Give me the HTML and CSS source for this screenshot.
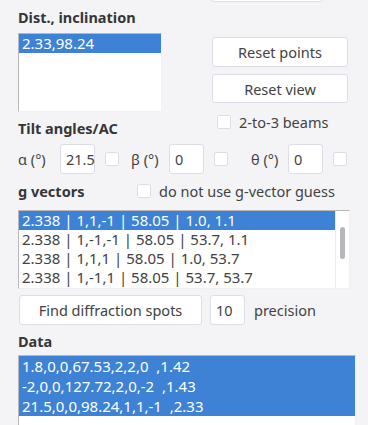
FILE: index.html
```html
<!DOCTYPE html>
<html lang="en">
<head>
    <meta charset="UTF-8">
    <title>Diffraction</title>
    <link rel="stylesheet" href="styles.css">
</head>
<body>
    <div class="panel">
        <!-- Top: distance list + buttons -->
        <div class="top-row">
            <div class="left-col">
                <h3 class="label">Dist., inclination</h3>
                <div class="listbox list-dist">
                    <div class="list-item selected">2.33,98.24</div>
                </div>
                <h3 class="label label-tilt">Tilt angles/AC</h3>
            </div>
            <div class="right-col">
                <button class="btn btn-top"></button>
                <button class="btn btn-wide btn-reset">Reset points</button>
                <button class="btn btn-wide btn-view">Reset view</button>
                <label class="check check-beams"><span class="box"></span>2-to-3 beams</label>
            </div>
        </div>

        <!-- Tilt angles -->
        <div class="angle-row">
            <span class="angle-label">α (°)</span>
            <div class="field">21.5</div>
            <span class="box box-angle"></span>
            <span class="angle-label lbl-beta">β (°)</span>
            <div class="field">0</div>
            <span class="box box-angle"></span>
            <span class="angle-label lbl-theta">θ (°)</span>
            <div class="field">0</div>
            <span class="box box-angle"></span>
        </div>

        <!-- g vectors -->
        <div class="gvec-row">
            <h3 class="label">g vectors</h3>
            <label class="check check-guess"><span class="box"></span>do not use g-vector guess</label>
        </div>
        <div class="listbox list-gvec">
            <div class="list-rows">
                <div class="list-item selected">2.338 | 1,1,-1 | 58.05 | 1.0, 1.1</div>
                <div class="list-item">2.338 | 1,-1,-1 | 58.05 | 53.7, 1.1</div>
                <div class="list-item">2.338 | 1,1,1 | 58.05 | 1.0, 53.7</div>
                <div class="list-item">2.338 | 1,-1,1 | 58.05 | 53.7, 53.7</div>
            </div>
            <div class="scroll-track"><div class="scroll-thumb"></div></div>
        </div>

        <div class="find-row">
            <button class="btn btn-find">Find diffraction spots</button>
            <div class="field field-prec">10</div>
            <span class="prec-label">precision</span>
        </div>

        <!-- Data -->
        <h3 class="label label-data">Data</h3>
        <div class="listbox list-data">
            <div class="list-item selected">1.8,0,0,67.53,2,2,0 &nbsp;,1.42</div>
            <div class="list-item selected">-2,0,0,127.72,2,0,-2 &nbsp;,1.43</div>
            <div class="list-item selected">21.5,0,0,98.24,1,1,-1 &nbsp;,2.33</div>
        </div>
    </div>
</body>
</html>
```

FILE: styles.css
```css
:root {
    --bg: #f4f4f7;
    --text: #424242;
    --border: #dcdde8;
    --select: #3d82d5;
}

* { margin: 0; padding: 0; box-sizing: border-box; }
body {
    font-family: 'Noto Sans', sans-serif; font-size: 14.5px;
    background: var(--bg); color: var(--text); overflow: hidden;
}

.panel { padding: 0 18px; }

/* Labels */
.label { font-size: 14.5px; font-weight: bold; line-height: 18px; color: #363636; }

/* Top area */
.top-row { display: flex; }
.left-col { width: 194px; padding-top: 8px; }
.right-col { display: flex; flex-direction: column; align-items: flex-start; }
.label-tilt { margin-top: 7px; }

/* Buttons */
.btn {
    background: white; border: 1px solid var(--border); border-radius: 3px;
    font-family: inherit; font-size: 14.5px; color: var(--text); height: 30px;
}
.btn-top { width: 112px; margin-top: -28px; margin-left: -1px; }
.btn-wide { width: 136px; }
.btn-reset { margin-top: 35px; }
.btn-view { margin-top: 7px; height: 29px; }

/* Checkboxes */
.box {
    display: inline-block; width: 14px; height: 14px; background: white;
    border: 1px solid var(--border); border-radius: 2px; flex: none;
}
.check { display: flex; align-items: center; gap: 8px; line-height: 18px; }
.check-beams { margin-top: 10px; margin-left: 5px; }

/* Angles */
.angle-row { display: flex; align-items: center; margin-top: 7px; }
.angle-label { width: 42px; }
.field {
    width: 35px; height: 30px; background: white; border: 1px solid var(--border);
    border-radius: 3px; padding-left: 5px; line-height: 28px;
}
.box-angle { margin-left: 10px; }
.lbl-beta { margin-left: 12px; width: 38px; }
.lbl-theta { margin-left: 23px; width: 37px; }

/* g vectors */
.gvec-row { display: flex; align-items: center; gap: 52px; margin-top: 8px; }
.gvec-row .label { width: 67px; }

/* List boxes */
.listbox {
    background: white; border: 1px solid #f0f0f2;
    border-top-color: #b8b8bc; border-left-color: #b8b8bc; font-size: 15px;
}
.list-item { height: 19px; line-height: 19px; padding-left: 3px; white-space: nowrap; }
.list-item.selected { background: var(--select); color: white; }
.list-dist { width: 144px; height: 79px; margin-top: 7px; }
.list-gvec { display: flex; width: 332px; height: 79px; margin-top: 10px; }
.list-rows { flex: 1; overflow: hidden; }
.scroll-track { width: 14px; border-left: 1px solid #ececef; display: flex; justify-content: center; }
.scroll-thumb { width: 5px; height: 32px; margin-top: 16px; background: #b6b6ba; border-radius: 3px; }

/* Find row */
.find-row { display: flex; align-items: center; margin-top: 6px; }
.btn-find { width: 183px; margin-left: 1px; }
.field-prec { margin-left: 8px; }
.prec-label { margin-left: 9px; }

/* Data */
.label-data { margin-top: 7px; }
.list-data { width: 338px; height: 90px; margin-top: 5px; }
.list-data .list-item { height: 20px; line-height: 20px; }
```
